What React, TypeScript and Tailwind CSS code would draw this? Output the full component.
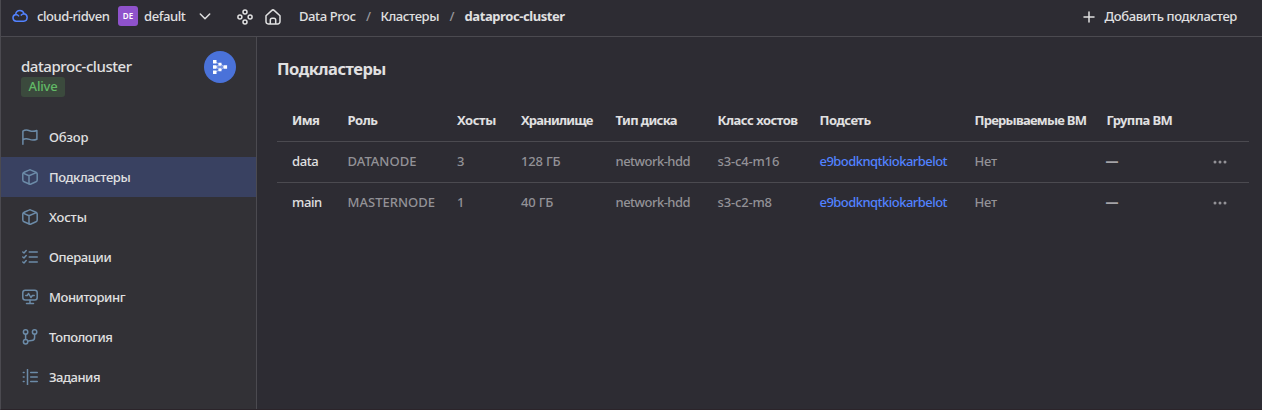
import type { ReactNode } from "react";

function Svg({ children, className = "" }: { children: ReactNode; className?: string }) {
  return (
    <svg viewBox="0 0 16 16" width="16" height="16" fill="none" stroke="currentColor" strokeWidth="1.5" strokeLinecap="round" strokeLinejoin="round" className={`shrink-0 ${className}`}>
      {children}
    </svg>
  );
}

const FlagIcon = () => (
  <Svg>
    <path d="M.9 15.2V2.2c2.2-1.6 4.3-1.4 6.6-.5s4.600 1 7.400-.2v8.700c-2.800 1.200-5.100 1.100-7.400.2S3.100 9.100.9 10.800" />
  </Svg>
);

const CubeIcon = () => (
  <Svg>
    <path d="M7 1.100a2 2 0 0 1 2 0l4.900 2.100a2 2 0 0 1 1.300 1.800v6a2 2 0 0 1-1.200 1.800L9 15a2 2 0 0 1-1.700 0L2 12.800A2 2 0 0 1 .8 11V5a2 2 0 0 1 1.300-1.800z" />
    <path d="M1.600 4.400 7 6.800l7.300-3.200M7 6.800v8" />
  </Svg>
);

const ChecksIcon = () => (
  <Svg>
    <path d="M7.250 3h8M7.250 8h8M7.250 13h8M.8 3l1.200 1 2.200-2.400M.8 8 2 9l2.200-2.400M.8 13 2 14l2.200-2.400" />
  </Svg>
);

const MonitorIcon = () => (
  <Svg>
    <rect x=".8" y="1.200" width="14.400" height="9.800" rx="2.500" />
    <path d="M8 11v3.500M4.500 14.600h7M3.800 6.500h1.500L6.600 4.500l2.300 4 1.500-2h1.800" />
  </Svg>
);

const BranchIcon = () => (
  <Svg>
    <circle cx="3.600" cy="3" r="2.200" />
    <circle cx="12.600" cy="3" r="2.200" />
    <circle cx="3.600" cy="12.800" r="2.200" />
    <path d="M3.600 5.200v5.400M12.600 5.200v3.300a3 3 0 0 1-3 3c-1.500 0-2.600.2-3.800.6" />
  </Svg>
);

const JobsIcon = () => (
  <Svg>
    <path d="M5.500.6v15M8.700 3.500h6.600M8.700 8h6.600M8.700 12.500h6.600M1.300 3.500h.8M1.300 8h.8M1.300 12.500h.8" />
  </Svg>
);

const nav = [
  { label: "Обзор", icon: FlagIcon, track: "tracking-[-0.15px]" },
  { label: "Подкластеры", icon: CubeIcon, active: true, track: "tracking-[-0.42px]" },
  { label: "Хосты", icon: CubeIcon, track: "tracking-[-0.15px]" },
  { label: "Операции", icon: ChecksIcon, track: "tracking-[-0.37px]" },
  { label: "Мониторинг", icon: MonitorIcon, track: "tracking-[-0.43px]" },
  { label: "Топология", icon: BranchIcon, track: "tracking-[-0.48px]" },
  { label: "Задания", icon: JobsIcon, track: "tracking-[-0.48px]" },
];

const headers = [
  ["Имя", "tracking-[-0.6px]"],
  ["Роль", "tracking-[-0.45px]"],
  ["Хосты", "tracking-[-0.4px]"],
  ["Хранилище", "tracking-[-0.8px]"],
  ["Тип диска", "tracking-[-0.62px]"],
  ["Класс хостов", "tracking-[-0.5px]"],
  ["Подсеть", "tracking-[-0.48px]"],
  ["Прерываемые ВМ", "tracking-[-0.74px]"],
  ["Группа ВМ", "tracking-[-0.62px]"],
];

const rows = [
  { name: "data", role: "DATANODE", hosts: "3", storage: "128 ГБ", disk: "network-hdd", cls: "s3-c4-m16", subnet: "e9bodknqtkiokarbelot" },
  { name: "main", role: "MASTERNODE", hosts: "1", storage: "40 ГБ", disk: "network-hdd", cls: "s3-c2-m8", subnet: "e9bodknqtkiokarbelot" },
];

const grid =
  "grid grid-cols-[55.5px_109.5px_64px_94.500px_102px_102px_155px_132px_106px_1fr] items-center border-[#4b4a50] pl-[15px] whitespace-nowrap";

function Header() {
  return (
    <header className="flex h-[37px] shrink-0 items-center border-b border-[#4b4a50] pb-1 pl-[11px] pr-[25px] whitespace-nowrap">
      <Svg className="text-[#5282ff]">
        <path d="M4.300 13.300a3.500 3.500 0 0 1-.6-6.900c.3-2.400 2-3.900 4.200-3.900 2 0 3.600 1.200 4.200 3.300a3.800 3.800 0 0 1-.4 7.500zM3.700 6.400c1.400 0 2.300.5 2.900 1.500M12.100 5.800c-1.200 0-2.100.5-2.800 1.300" />
      </Svg>
      <span className="ml-[9px] w-[81px] tracking-[-0.45px]">cloud-ridven</span>
      <span className="flex size-5 items-center justify-center rounded-[3px] bg-[#8f52cc] text-[8px] font-semibold text-white">DE</span>
      <span className="ml-1.5 w-[55px] tracking-[-0.42px]">default</span>
      <svg viewBox="0 0 12 12" width="12" height="12" fill="none" stroke="currentColor" strokeWidth="1.500" strokeLinecap="round" strokeLinejoin="round">
        <path d="M1.300 4 6 8.700 10.700 4" />
      </svg>
      <Svg className="ml-[26px] translate-y-px">
        <circle cx="8" cy="2.900" r="2" />
        <circle cx="2.900" cy="8" r="2" />
        <circle cx="13.100" cy="8" r="2" />
        <circle cx="8" cy="13.100" r="2" />
      </Svg>
      <Svg className="ml-3 translate-y-px">
        <path d="M1 6.800 6.600 1.600a2 2 0 0 1 2.800 0L15 6.800v5.800a2.300 2.300 0 0 1-2.300 2.300H3.300A2.300 2.300 0 0 1 1 12.600zM5.300 14.600v-3.600a1.800 1.800 0 0 1 1.800-1.800h1.800a1.800 1.800 0 0 1 1.800 1.800v3.600" />
      </Svg>
      <nav className="ml-[18px] flex">
        <span className="w-[67px] tracking-[-0.42px]">Data Proc</span>
        <span className="w-[14.500px] text-[#98979c]">/</span>
        <span className="w-[69px] tracking-[-0.4px]">Кластеры</span>
        <span className="w-[15px] text-[#98979c]">/</span>
        <span className="font-[680] tracking-[-0.42px]">dataproc-cluster</span>
      </nav>
      <svg viewBox="0 0 12 12" width="12" height="12" fill="none" stroke="currentColor" strokeWidth="1.500" strokeLinecap="round" className="mr-[9px] ml-auto translate-y-px">
        <path d="M6 1v10M1 6h10" />
      </svg>
      <span className="tracking-[-0.36px]">Добавить подкластер</span>
    </header>
  );
}

function Sidebar() {
  return (
    <aside className="flex w-[256px] shrink-0 flex-col border-r border-[#4b4a50] bg-[#323136]">
      <div className="flex h-[80px] items-start justify-between pt-[14px] pr-5 pl-5">
        <div>
          <div className="h-[26px] text-[15px] leading-[30px] tracking-[-0.44px]">dataproc-cluster</div>
          <div className="flex h-5 w-11 items-center justify-center rounded-[3px] bg-[#3b4a3d] pb-0.5 tracking-[-0.2px] text-[#62b966]">Alive</div>
        </div>
        <div className="flex size-8 items-center justify-center rounded-full bg-[#4a72d9]">
          <svg viewBox="0 0 16 16" width="16" height="16" fill="#fff">
            <path d="M1 1h3.500v3.500H1zM1 6.200h3.500v3.600H1zM1 11.500h3.500V15H1zM6.500 3.700h3v3h-3zM6.500 9.300h3v3h-3zM11.600 6.200h3.500v3.600h-3.500z" />
            <path d="M4 3.300 7.500 5.200 4 8l3.500 2.800L4 12.700M9 5.200 12.500 8 9 10.800M4 8h8" fill="none" stroke="#fff" strokeWidth=".5" />
          </svg>
        </div>
      </div>
      {nav.map(({ label, icon: Icon, active, track }) => (
        <div key={label} className={`flex h-10 shrink-0 items-center gap-[11px] pl-[21px] ${active ? "bg-[#394161]" : ""}`}>
          <span className="text-[#6c8ba8]"><Icon /></span>
          <span className={track}>{label}</span>
        </div>
      ))}
    </aside>
  );
}

export default function App() {
  return (
    <div className="flex h-[410px] w-[1262px] flex-col overflow-hidden border-b border-l border-b-[#2b242a] border-l-[#4b4a50] bg-[#2d2c33] font-['Noto_Sans',sans-serif] text-[13px] leading-[18px] font-[490] text-[#e0e0e1]">
      <Header />
      <div className="flex min-h-0 flex-1">
        <Sidebar />
        <main className="flex-1 pr-[13px] pl-5">
          <h1 className="pt-5 text-[16.500px] leading-6 font-bold tracking-[-0.5px]">Подкластеры</h1>
          <div className={`${grid} mt-[19px] h-[42px] border-b pb-0.5 font-[680]`}>
            {headers.map(([h, t]) => <span key={h} className={t}>{h}</span>)}
          </div>
          {rows.map((r, i) => (
            <div key={r.name} className={`${grid} h-[41px] text-[#939297] ${i === 0 ? "border-b pb-0.5" : "pb-[3px]"}`}>
              <span className="tracking-[-0.4px] text-[#e0e0e1]">{r.name}</span>
              <span className="tracking-[0.02px]">{r.role}</span>
              <span>{r.hosts}</span>
              <span className="tracking-[-0.2px]">{r.storage}</span>
              <span className="tracking-[-0.52px]">{r.disk}</span>
              <span className="tracking-[-0.16px]">{r.cls}</span>
              <span className="tracking-[-0.54px] text-[#5282ff]">{r.subnet}</span>
              <span className="tracking-[-0.2px]">Нет</span>
              <span className="-ml-px font-black text-[#a5a4a8]">—</span>
              <svg viewBox="0 0 14 4" width="14" height="4" fill="currentColor" className="translate-y-px">
                <circle cx="2" cy="2" r="1.500" />
                <circle cx="7" cy="2" r="1.500" />
                <circle cx="12" cy="2" r="1.500" />
              </svg>
            </div>
          ))}
        </main>
      </div>
    </div>
  );
}
